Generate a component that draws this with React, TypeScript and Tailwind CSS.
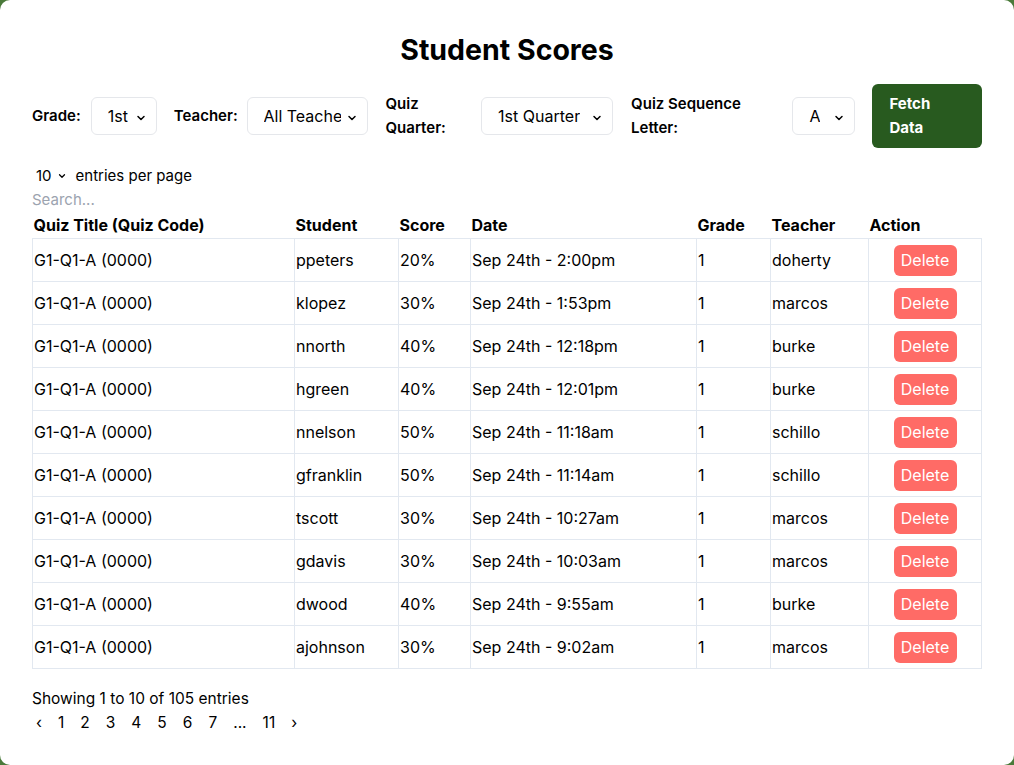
import { ChevronDown } from "lucide-react";

type Score = {
  student: string;
  score: string;
  date: string;
  teacher: string;
};

const scores: Score[] = [
  { student: "ppeters", score: "20%", date: "Sep 24th - 2:00pm", teacher: "doherty" },
  { student: "klopez", score: "30%", date: "Sep 24th - 1:53pm", teacher: "marcos" },
  { student: "nnorth", score: "40%", date: "Sep 24th - 12:18pm", teacher: "burke" },
  { student: "hgreen", score: "40%", date: "Sep 24th - 12:01pm", teacher: "burke" },
  { student: "nnelson", score: "50%", date: "Sep 24th - 11:18am", teacher: "schillo" },
  { student: "gfranklin", score: "50%", date: "Sep 24th - 11:14am", teacher: "schillo" },
  { student: "tscott", score: "30%", date: "Sep 24th - 10:27am", teacher: "marcos" },
  { student: "gdavis", score: "30%", date: "Sep 24th - 10:03am", teacher: "marcos" },
  { student: "dwood", score: "40%", date: "Sep 24th - 9:55am", teacher: "burke" },
  { student: "ajohnson", score: "30%", date: "Sep 24th - 9:02am", teacher: "marcos" },
];

function Select({ value, width }: { value: string; width: string }) {
  return (
    <div className={`relative h-[38px] ${width} shrink-0 rounded-md border border-[#e5e7eb] bg-white`}>
      <div className="flex h-full items-center pl-4 pr-[26px] text-[16px]">
        <span className="overflow-hidden whitespace-nowrap">{value}</span>
      </div>
      <ChevronDown className="pointer-events-none absolute right-[9px] top-[14px] h-3 w-3" strokeWidth={3} />
    </div>
  );
}

export default function App() {
  const cell = "border border-[#e2e8f0] pl-[1px] pr-2 align-middle";
  return (
    <div className="min-h-screen bg-[#4a7a3a]" style={{ fontFamily: "Inter, 'Liberation Sans', sans-serif" }}>
      <div className="min-h-[765px] rounded-[10px] bg-white px-8 pt-8 text-[15px] text-black">
        <h1 className="text-center text-[28.5px] font-bold leading-9">Student Scores</h1>

        <div className="mt-4 flex items-center">
          <span className="mr-2 w-[51px] font-semibold">Grade:</span>
          <Select value="1st" width="w-[66px]" />
          <span className="ml-[17px] mr-2 w-[65px] font-semibold">Teacher:</span>
          <Select value="All Teachers" width="w-[121px]" />
          <span className="ml-[18px] mr-2 w-[88px] font-semibold leading-6">
            Quiz
            <br />
            Quarter:
          </span>
          <Select value="1st Quarter" width="w-[132px]" />
          <span className="ml-[18px] mr-2 w-[154px] font-semibold leading-6">
            Quiz Sequence
            <br />
            Letter:
          </span>
          <Select value="A" width="w-[63px]" />
          <button className="ml-[17px] h-[64px] w-[110px] rounded-md bg-[#285a1f] pl-[17px] text-left font-bold leading-6 text-white">
            Fetch
            <br />
            Data
          </button>
        </div>

        <div className="mt-4 flex items-center pl-1 leading-6">
          <span>10</span>
          <ChevronDown className="ml-[5px] h-[10px] w-[10px]" strokeWidth={3} />
          <span className="ml-[9px]">entries per page</span>
        </div>
        <div className="leading-6 text-[#9ca3af]">Search...</div>

        <table className="w-full border-collapse text-[16px]">
          <thead>
            <tr className="text-left font-bold">
              <th className="w-[262px] pl-[1px] leading-[26px]">Quiz Title (Quiz Code)</th>
              <th className="w-[104px] pl-[1px]">Student</th>
              <th className="w-[72px] pl-[1px]">Score</th>
              <th className="w-[226px] pl-[1px]">Date</th>
              <th className="w-[74px] pl-[1px]">Grade</th>
              <th className="w-[98px] pl-[1px]">Teacher</th>
              <th className="pl-[1px]">Action</th>
            </tr>
          </thead>
          <tbody>
            {scores.map((s) => (
              <tr key={s.student} className="h-[43px]">
                <td className={cell}>G1-Q1-A (0000)</td>
                <td className={cell}>{s.student}</td>
                <td className={cell}>{s.score}</td>
                <td className={cell}>{s.date}</td>
                <td className={cell}>1</td>
                <td className={cell}>{s.teacher}</td>
                <td className="border border-[#e2e8f0] text-center align-middle">
                  <button className="h-[31px] w-[63px] rounded-md bg-[#ff6b66] text-[16px] text-white">Delete</button>
                </td>
              </tr>
            ))}
          </tbody>
        </table>

        <div className="mt-[18px] text-[15.5px] leading-6">Showing 1 to 10 of 105 entries</div>
        <div className="ml-1 flex items-center gap-4 text-[15.5px] leading-6">
          {["‹", "1", "2", "3", "4", "5", "6", "7", "...", "11", "›"].map((p) => (
            <span key={p}>{p}</span>
          ))}
        </div>
      </div>
    </div>
  );
}
